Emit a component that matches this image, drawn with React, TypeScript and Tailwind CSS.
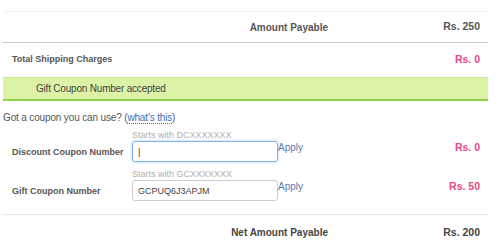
import { useState } from "react";

const font = { fontFamily: "'Liberation Sans', Arial, sans-serif" };

const CouponRow = ({ label, hint, value, amount, focused }: { label: string; hint: string; value: string; amount: string; focused?: boolean }) => {
    const [text, setText] = useState(value);
    return (
        <div className="flex items-start">
            <div className="w-[129px] whitespace-nowrap pl-[9px] pt-[16px] text-[9px] leading-[12px] font-bold text-[#555]">{label}</div>
            <div className="flex flex-col">
                <span className="whitespace-nowrap text-[9px] leading-[11px] text-[#b0b0b0]">{hint}</span>
                <input
                    className={
                        focused
                            ? "h-[21px] w-[146px] rounded-[3px] border border-[#7fb2e8] px-[5px] text-[9px] text-[#333] outline-none shadow-[0_0_3px_#a8ccf0]"
                            : "h-[21px] w-[146px] rounded-[3px] border border-[#ccc] px-[5px] text-[9px] text-[#444] outline-none"
                    }
                    value={text}
                    onChange={(e) => setText(e.target.value)}
                />
            </div>
            <a className="pt-[12px] text-[10px] leading-[12px] text-[#5a78b0]" href="#">Apply</a>
            <div className="ml-auto pr-[8px] pt-[11px] text-[10.5px] leading-[12px] font-bold text-[#e8478b]">{amount}</div>
        </div>
    );
};

const App = () => {
    return (
        <div className="h-[246px] w-[500px] overflow-hidden bg-white" style={font}>
            <div className="ml-[3px] w-[485px] pt-[11px]">
                <div className="flex h-[31px] items-center border-t border-[#f0f0f0]">
                    <div className="w-[325px] text-right text-[10px] font-bold text-[#555]">Amount Payable</div>
                    <div className="flex-1 pr-[8px] text-right text-[10.5px] font-bold text-[#555]">Rs. 250</div>
                </div>
                <div className="flex h-[35px] items-center border-t border-[#ccc]">
                    <div className="pl-[9px] text-[9px] font-bold text-[#555]">Total Shipping Charges</div>
                    <div className="ml-auto pr-[8px] text-[10.5px] font-bold text-[#e8478b]">Rs. 0</div>
                </div>
                <div className="flex h-[24px] items-center border-t border-[#c8eb8f] border-b-2 border-b-[#8fd14f] bg-[#dcf2a6] pl-[33px] text-[10px] tracking-[-0.2px] text-[#444]">
                    Gift Coupon Number accepted
                </div>
                <div className="mt-[11px] text-[10px] leading-[12px] tracking-[-0.15px] text-[#555]">
                    Got a coupon you can use? (<a className="border-b border-dotted border-[#3b6fb6] text-[#3b6fb6]" href="#">what's this</a>)
                </div>
                <div className="mt-[6px] flex flex-col gap-[7px]">
                    <CouponRow label="Discount Coupon Number" hint="Starts with DCXXXXXXX" value="|" amount="Rs. 0" focused />
                    <CouponRow label="Gift Coupon Number" hint="Starts with GCXXXXXXX" value="GCPUQ6J3APJM" amount="Rs. 50" />
                </div>
                <div className="mt-[13px] flex h-[36px] items-center border-t border-[#e5e5e5]">
                    <div className="w-[325px] text-right text-[10px] font-bold text-[#444]">Net Amount Payable</div>
                    <div className="flex-1 pr-[8px] text-right text-[10.5px] font-bold text-[#444]">Rs. 200</div>
                </div>
            </div>
        </div>
    );
};

export default App;
